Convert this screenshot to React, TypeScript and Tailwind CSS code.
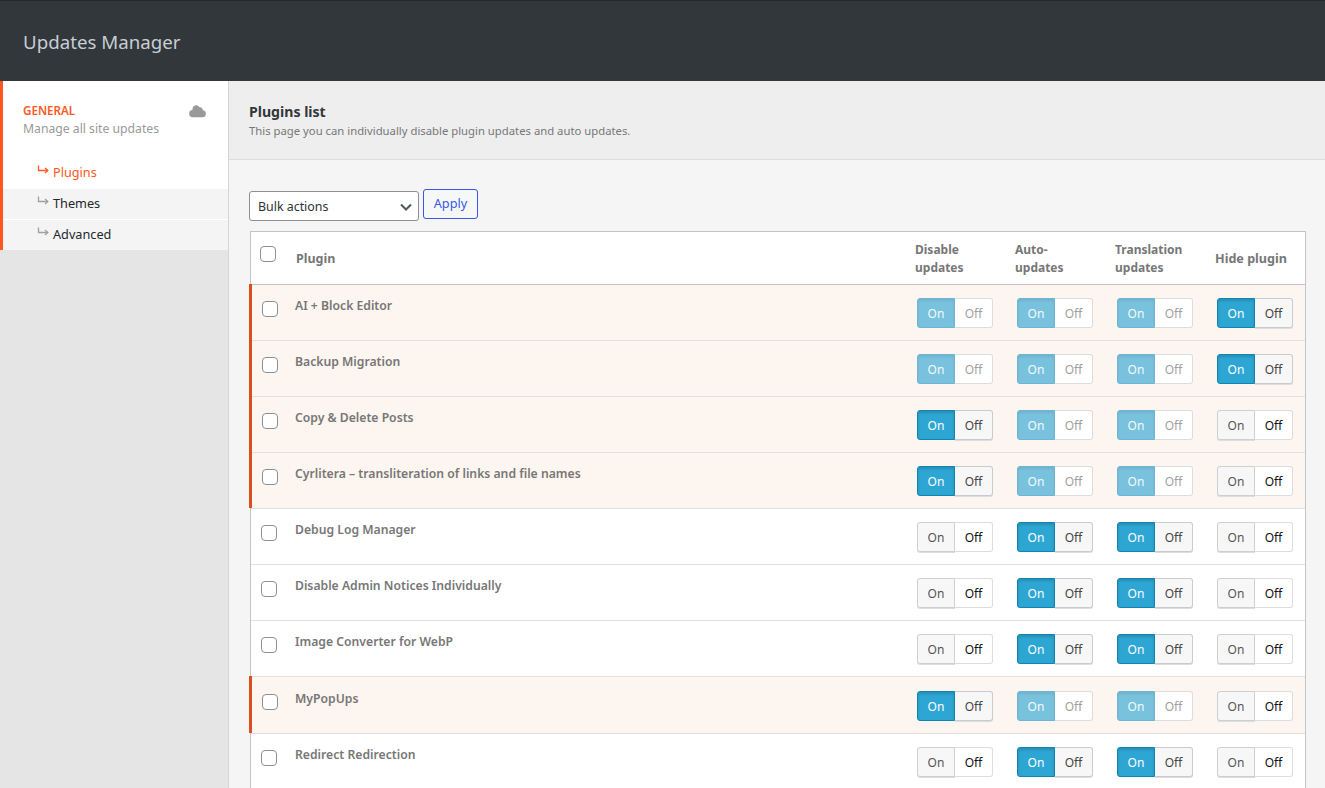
const F = { fontFamily: '"Noto Sans", "Open Sans", sans-serif' };

type Row = { name: string; flag: boolean; mode: ("dim" | "on" | "off")[]; tall?: boolean };

const rows: Row[] = [
  { name: "AI + Block Editor", flag: true, mode: ["dim", "dim", "dim", "on"] },
  { name: "Backup Migration", flag: true, mode: ["dim", "dim", "dim", "on"] },
  { name: "Copy & Delete Posts", flag: true, mode: ["on", "dim", "dim", "off"] },
  { name: "Cyrlitera – transliteration of links and file names", flag: true, mode: ["on", "dim", "dim", "off"] },
  { name: "Debug Log Manager", flag: false, mode: ["off", "on", "on", "off"] },
  { name: "Disable Admin Notices Individually", flag: false, mode: ["off", "on", "on", "off"] },
  { name: "Image Converter for WebP", flag: false, mode: ["off", "on", "on", "off"] },
  { name: "MyPopUps", flag: true, mode: ["on", "dim", "dim", "off"], tall: true },
  { name: "Redirect Redirection", flag: false, mode: ["off", "on", "on", "off"] },
];

function Toggle({ mode }: { mode: "dim" | "on" | "off" }) {
  if (mode === "dim") {
    return (
      <div className="flex h-[30px] w-[76px] text-[12px] leading-[30px]">
        <div className="w-[38px] rounded-l-[3px] border border-[#6fb5d1] bg-[#79c2de] text-center text-[#f4fafc] shadow-[inset_0_2px_3px_rgba(0,0,0,0.08)]">On</div>
        <div className="w-[38px] rounded-r-[3px] border border-l-0 border-[#dddddd] bg-white text-center text-[#a0a0a0]">Off</div>
      </div>
    );
  }
  if (mode === "on") {
    return (
      <div className="flex h-[30px] w-[76px] text-[12px] leading-[30px]">
        <div className="w-[38px] rounded-l-[3px] border border-[#0f86b0] bg-[#2ea6d3] text-center text-white shadow-[inset_0_2px_3px_rgba(0,0,0,0.15)]">On</div>
        <div className="w-[38px] rounded-r-[3px] border border-l-0 border-[#c8ccd0] bg-[#f7f7f7] text-center text-[#444] shadow-[0_1px_0_#dddddd]">Off</div>
      </div>
    );
  }
  return (
    <div className="flex h-[30px] w-[76px] text-[12px] leading-[30px]">
      <div className="w-[38px] rounded-l-[3px] border border-[#ccd0d4] bg-[#f7f7f7] text-center text-[#555] shadow-[0_1px_0_#dddddd]">On</div>
      <div className="w-[38px] rounded-r-[3px] border border-l-0 border-[#dddddd] bg-white text-center text-[#111]">Off</div>
    </div>
  );
}

function Check({ className }: { className: string }) {
  return <div className={`h-4 w-4 rounded-[4px] border border-[#8c8f94] bg-white ${className}`} />;
}

function Arrow({ color }: { color: string }) {
  return (
    <svg width="12" height="10" viewBox="0 0 12 10" fill="none" stroke={color} strokeWidth="1.3" className="shrink-0">
      <path d="M1.5 0.5V5.5H10.5" />
      <path d="M8 3L10.8 5.5L8 8" />
    </svg>
  );
}

function SideLink({ label, state }: { label: string; state: "active" | "mid" | "last" }) {
  const cls =
    state === "active"
      ? "h-[32px] bg-white text-[#ff5722]"
      : state === "mid"
        ? "h-[31px] border-b border-white bg-[#f4f4f4] text-[#23282d]"
        : "h-[30px] bg-[#f4f4f4] text-[#23282d]";
  return (
    <div className={`flex items-center pl-[34px] text-[12.7px] ${cls}`}>
      <div className="mr-[4px] -mt-[6px]">
        <Arrow color={state === "active" ? "#ff5722" : "#a0a0a0"} />
      </div>
      {label}
    </div>
  );
}

export default function App() {
  return (
    <div className="flex h-[788px] w-[1325px] flex-col overflow-hidden bg-[#f5f5f5]" style={F}>
      <header className="flex h-[81px] shrink-0 items-center border-t border-[#23282d] bg-[#32373c] pl-[23px] pt-[2px]">
        <h1 className="text-[18.7px] font-normal text-[#c8ced3]">Updates Manager</h1>
      </header>
      <div className="flex min-h-0 flex-1">
        <aside className="w-[229px] shrink-0 border-r border-[#d5d5d5] bg-[#e5e5e5]">
          <div className="border-l-[3px] border-[#ff5722]">
            <div className="relative bg-white pb-[19px] pl-[20px] pt-[21px]">
              <div className="text-[11.6px] font-semibold leading-[18px] text-[#ff5722]">GENERAL</div>
              <div className="text-[12.2px] leading-[18px] text-[#999999]">Manage all site updates</div>
              <svg className="absolute right-[22px] top-[24px]" width="17" height="13" viewBox="0 0 18 14" fill="#999999">
                <path d="M14.6 5.6A3.2 3.2 0 0 0 11.2 2.4 4.3 4.3 0 0 0 7.6 0.4 4 4 0 0 0 3.6 4.6V5.3A3.9 3.9 0 0 0 0 9.2 4 4 0 0 0 4 13.2H14.2A3.8 3.8 0 0 0 18 9.4 3.9 3.9 0 0 0 14.6 5.6Z" />
              </svg>
            </div>
            <SideLink label="Plugins" state="active" />
            <SideLink label="Themes" state="mid" />
            <SideLink label="Advanced" state="last" />
          </div>
        </aside>
        <main className="min-w-0 flex-1">
          <div className="h-[79px] border-b border-[#dddddd] bg-[#eeeeee] pl-[20px] pt-[20px]">
            <h2 className="text-[14.1px] font-bold leading-[22px] text-[#32373c]">Plugins list</h2>
            <p className="text-[11.3px] leading-[15px] text-[#777777]">This page you can individually disable plugin updates and auto updates.</p>
          </div>
          <div className="pl-[20px] pr-[19px] pt-[29px]">
            <div className="flex items-start gap-[4px]">
              <div className="mt-[2px] flex h-[30px] w-[170px] items-center justify-between rounded-[3px] border border-[#8c8f94] bg-white pl-[8px] pr-[6px] pt-[2px] text-[12.4px] text-[#2c3338]">
                Bulk actions
                <svg width="12" height="8" viewBox="0 0 12 8" fill="none" stroke="#50575e" strokeWidth="2"><path d="M1 1.5L6 6.5L11 1.5" /></svg>
              </div>
              <button className="h-[30px] w-[55px] rounded-[3px] border border-[#3858e9] bg-[#f6f7f7] text-[12.7px] text-[#3858e9]">Apply</button>
            </div>
            <div className="ml-[1px] mt-[10px] border border-[#c3c4c7] border-b-0 bg-white">
              <div className="flex h-[53px] items-center border-b border-[#c3c4c7] pt-[2px] text-[12px] font-bold text-[#777777]">
                <div className="w-[45px] pl-[9px]"><Check className="-mt-[10px]" /></div>
                <div className="flex-1 text-[12.5px]">Plugin</div>
                <div className="w-[100px] leading-[18px]">Disable<br />updates</div>
                <div className="w-[100px] leading-[18px]">Auto-<br />updates</div>
                <div className="w-[100px] leading-[18px]">Translation<br />updates</div>
                <div className="w-[90px] text-[12.6px] leading-[18px]">Hide plugin</div>
              </div>
              {rows.map((r) => (
                <div key={r.name} className={`relative flex ${r.tall ? "h-[57px]" : "h-[56px]"} border-b border-[#e0e0e0] ${r.flag ? "bg-[#fdf5ef]" : "bg-white"}`}>
                  {r.flag && <div className="absolute -left-[2px] -top-px bottom-0 w-[3px] bg-[#d9501e]" />}
                  <div className={`w-[44px] ${r.tall ? "pt-[17px]" : "pt-[16px]"} ${r.flag ? "pl-[11px]" : "pl-[10px]"}`}><Check className="" /></div>
                  <div className={`flex-1 ${r.tall ? "pt-[12px]" : "pt-[11px]"} text-[12.2px] font-semibold leading-[20px] text-[#777777]`}>{r.name}</div>
                  {r.mode.map((m, i) => (
                    <div key={i} className={`${i === 3 ? "w-[90px]" : "w-[100px]"} pl-[2px] ${r.tall ? "pt-[14px]" : "pt-[13px]"}`}>
                      <Toggle mode={m} />
                    </div>
                  ))}
                </div>
              ))}
            </div>
          </div>
        </main>
      </div>
    </div>
  );
}
